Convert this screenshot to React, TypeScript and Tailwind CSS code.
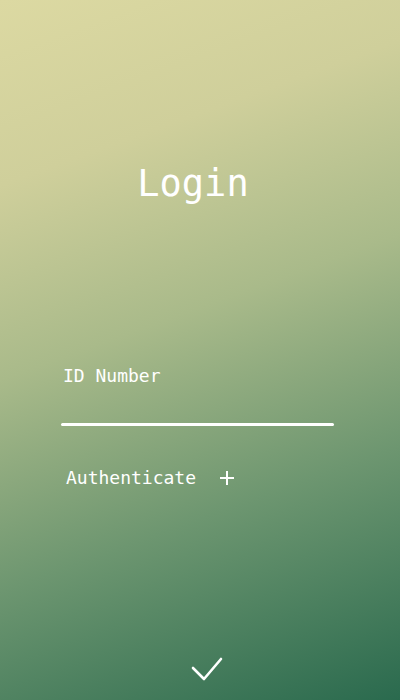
import React from 'react';

const App: React.FC = () => {
  return (
    <div
      className="w-[400px] h-[700px] flex flex-col text-white bg-[linear-gradient(160deg,#dcd9a2_0%,#cfcf9b_22%,#a9ba8a_45%,#6d9670_70%,#2a6a4e_100%)]"
      style={{ fontFamily: '"DejaVu Sans Mono", monospace' }}
    >
      {/* Title */}
      <h1 className="mt-[162px] pr-[14px] text-center text-[37px] leading-[44px]">Login</h1>

      {/* Form */}
      <div className="mt-[158px] px-[61px]">
        <label className="block pl-[2px] text-[18px] leading-[24px]">ID Number</label>
        <div className="mt-[35px] h-[3px] w-[273px] rounded-full bg-white" />
        <button className="mt-[40px] ml-[5px] flex items-center gap-[24px] text-[18px] leading-[24px]">
          <span>Authenticate</span>
          <svg width="14" height="14" viewBox="0 0 14 14" fill="none" stroke="white" strokeWidth="2">
            <path d="M7 0v14M0 7h14" />
          </svg>
        </button>
      </div>

      {/* Submit */}
      <div className="mt-auto mb-[18px] pl-[14px] flex justify-center">
        <svg width="32" height="26" viewBox="0 0 32 26" fill="none" stroke="white" strokeWidth="2.6" strokeLinecap="round" strokeLinejoin="round">
          <path d="M2 12l11 11L30 3" />
        </svg>
      </div>
    </div>
  );
};

export default App;
